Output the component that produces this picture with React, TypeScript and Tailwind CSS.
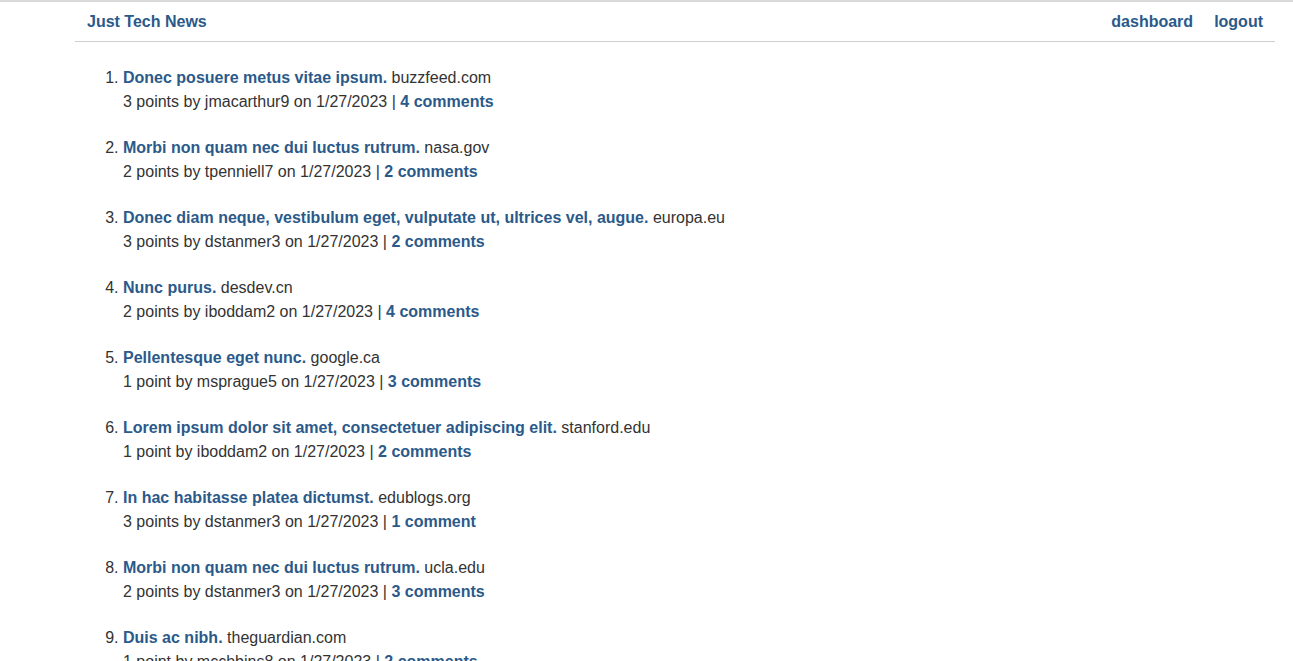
import React from 'react';

type Post = {
  title: string;
  site: string;
  points: number;
  user: string;
  comments: number;
};

const posts: Post[] = [
  { title: 'Donec posuere metus vitae ipsum.', site: 'buzzfeed.com', points: 3, user: 'jmacarthur9', comments: 4 },
  { title: 'Morbi non quam nec dui luctus rutrum.', site: 'nasa.gov', points: 2, user: 'tpenniell7', comments: 2 },
  { title: 'Donec diam neque, vestibulum eget, vulputate ut, ultrices vel, augue.', site: 'europa.eu', points: 3, user: 'dstanmer3', comments: 2 },
  { title: 'Nunc purus.', site: 'desdev.cn', points: 2, user: 'iboddam2', comments: 4 },
  { title: 'Pellentesque eget nunc.', site: 'google.ca', points: 1, user: 'msprague5', comments: 3 },
  { title: 'Lorem ipsum dolor sit amet, consectetuer adipiscing elit.', site: 'stanford.edu', points: 1, user: 'iboddam2', comments: 2 },
  { title: 'In hac habitasse platea dictumst.', site: 'edublogs.org', points: 3, user: 'dstanmer3', comments: 1 },
  { title: 'Morbi non quam nec dui luctus rutrum.', site: 'ucla.edu', points: 2, user: 'dstanmer3', comments: 3 },
  { title: 'Duis ac nibh.', site: 'theguardian.com', points: 1, user: 'mcchbins8', comments: 2 },
];

export default function App() {
  return (
    <div className="min-h-screen bg-white border-t-2 border-[#d9d9d9] text-[#333] text-base font-['Liberation_Sans',Arial,sans-serif]">
      {/* Header */}
      <header className="ml-[75px] w-[1200px] h-[40px] flex items-center justify-between border-b border-[#cfcfcf] px-3">
        <a href="#" className="font-bold text-[#2b5a8a]">Just Tech News</a>
        <nav className="flex items-center gap-[21px]">
          <a href="#" className="font-bold text-[#2b5a8a]">dashboard</a>
          <a href="#" className="font-bold text-[#2b5a8a]">logout</a>
        </nav>
      </header>

      {/* Posts */}
      <ol className="list-decimal ml-[123px] mt-[24px] flex flex-col gap-[22px]">
        {posts.map((post, i) => (
          <li key={i} className="leading-6">
            <div>
              <a href="#" className="font-bold text-[#2b5a8a]">{post.title}</a>{' '}
              <span>{post.site}</span>
            </div>
            <div>
              {post.points} {post.points === 1 ? 'point' : 'points'} by {post.user} on 1/27/2023 |{' '}
              <a href="#" className="font-bold text-[#2b5a8a]">
                {post.comments} {post.comments === 1 ? 'comment' : 'comments'}
              </a>
            </div>
          </li>
        ))}
      </ol>
    </div>
  );
}
